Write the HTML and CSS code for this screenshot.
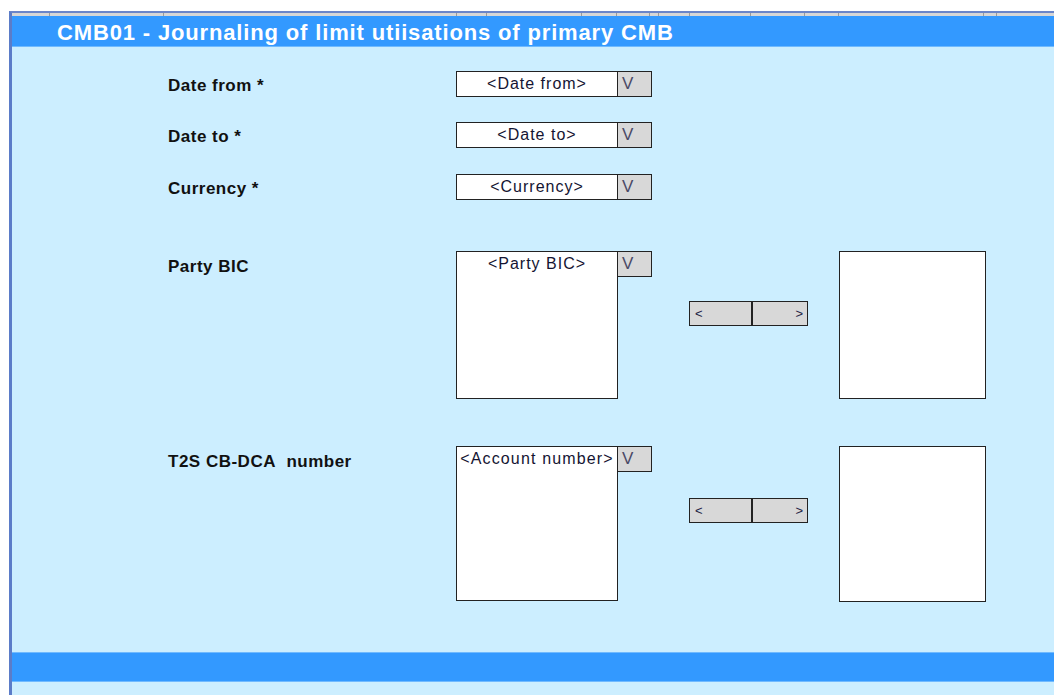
FILE: index.html
```html
<!DOCTYPE html>
<html>
<head>
<meta charset="utf-8">
<link rel="stylesheet" href="styles.css">
</head>
<body>
<div class="frame">
  <div class="ruler">
    <span style="width:38px"></span><span style="width:114px"></span><span style="width:293px"></span><span style="width:30px"></span><span style="width:95px"></span><span style="width:35px"></span><span style="width:33px"></span><span style="width:9px"></span><span style="width:31px"></span><span style="width:61px"></span><span style="width:54px"></span><span style="width:34px"></span><span style="width:145px"></span><span style="width:13px"></span><span class="rest"></span>
  </div>
  <div class="header">CMB01 - Journaling of limit utiisations of primary CMB</div>
  <div class="content">
    <div class="row r1">
      <div class="label">Date from *</div>
      <div class="combo"><div class="field">&lt;Date from&gt;</div><div class="btn">V</div></div>
    </div>
    <div class="row r2">
      <div class="label">Date to *</div>
      <div class="combo"><div class="field">&lt;Date to&gt;</div><div class="btn">V</div></div>
    </div>
    <div class="row r3">
      <div class="label">Currency *</div>
      <div class="combo"><div class="field">&lt;Currency&gt;</div><div class="btn">V</div></div>
    </div>
    <div class="group g1">
      <div class="label">Party BIC</div>
      <div class="combo top"><div class="list">&lt;Party BIC&gt;</div><div class="btn">V</div></div>
      <div class="arrows"><div class="al">&lt;</div><div class="ar">&gt;</div></div>
      <div class="target"></div>
    </div>
    <div class="group g2">
      <div class="label">T2S CB-DCA&nbsp; number</div>
      <div class="combo top"><div class="list">&lt;Account number&gt;</div><div class="btn">V</div></div>
      <div class="arrows"><div class="al">&lt;</div><div class="ar">&gt;</div></div>
      <div class="target"></div>
    </div>
  </div>
  <div class="footer"></div>
  <div class="tail"></div>
</div>
</body>
</html>
```

FILE: styles.css
```css
html, body {
  margin: 0;
  padding: 0;
  background: #ffffff;
  font-family: "Liberation Sans", Arial, sans-serif;
}
.frame {
  margin-top: 11px;
  margin-left: 9px;
  border-left: 3px solid #5b7cc8;
  border-top: 2px solid #6a85c9;
  height: 682px;
  display: flex;
  flex-direction: column;
  background: #cceeff;
}
.ruler {
  display: flex;
  height: 3px;
  background: #d6d6d6;
  flex: none;
}
.ruler span {
  box-sizing: border-box;
  border-right: 1px solid #9a9a9a;
  flex: none;
}
.ruler .rest {
  flex: 1;
  border-right: none;
}
.header {
  height: 31px;
  box-sizing: border-box;
  padding-top: 3px;
  line-height: 28px;
  background: #3399ff;
  color: #ffffff;
  font-weight: bold;
  font-size: 22px;
  letter-spacing: 0.85px;
  padding-left: 45px;
  border-bottom: 1px solid #6fbaff;
  white-space: nowrap;
  flex: none;
}
.content {
  padding-top: 24px;
  padding-left: 156px;
  flex: none;
  height: 581px;
  box-sizing: border-box;
}
.row {
  display: flex;
  align-items: center;
  height: 26px;
}
.r2 { margin-top: 25px; }
.r3 { margin-top: 26px; }
.label {
  width: 288px;
  flex: none;
  font-weight: bold;
  font-size: 17px;
  letter-spacing: 0.5px;
  color: #111111;
  white-space: nowrap;
  padding-top: 3px;
  box-sizing: border-box;
}
.combo {
  display: flex;
  flex: none;
}
.combo.top {
  align-items: flex-start;
}
.field, .list {
  box-sizing: border-box;
  width: 162px;
  height: 26px;
  border: 1px solid #222222;
  background: #ffffff;
  text-align: center;
  font-size: 16px;
  letter-spacing: 1px;
  line-height: 24px;
  color: #141432;
  white-space: nowrap;
  overflow: visible;
}
.btn {
  box-sizing: border-box;
  width: 35px;
  height: 26px;
  margin-left: -1px;
  border: 1px solid #222222;
  background: #d8d8d8;
  font-size: 17px;
  line-height: 24px;
  padding-left: 4px;
  color: #4a4a66;
}
.group {
  display: flex;
  align-items: flex-start;
}
.group .label {
  line-height: 28px;
  padding-top: 2px;
}
.g1 { margin-top: 51px; height: 148px; }
.g2 { margin-top: 47px; height: 155px; }
.g1 .list { height: 148px; }
.g2 .list { height: 155px; letter-spacing: 1.15px; }
.arrows {
  display: flex;
  margin-left: 37px;
  width: 119px;
  height: 25px;
  box-sizing: border-box;
  border: 1px solid #222222;
  background: #d8d8d8;
  font-size: 13px;
  line-height: 23px;
  color: #222244;
  flex: none;
}
.g1 .arrows { margin-top: 50px; }
.g2 .arrows { margin-top: 52px; }
.al {
  box-sizing: border-box;
  width: 63px;
  border-right: 2px solid #222222;
  padding-left: 5px;
}
.ar {
  flex: 1;
  text-align: right;
  padding-right: 4px;
}
.target {
  margin-left: 31px;
  width: 147px;
  box-sizing: border-box;
  border: 1px solid #222222;
  background: #ffffff;
  flex: none;
}
.g1 .target { height: 148px; }
.g2 .target { height: 156px; }
.footer {
  height: 30px;
  background: #3399ff;
  border-top: 1px solid #70baff;
  border-bottom: 1px solid #70baff;
  box-sizing: border-box;
  flex: none;
  margin-top: 24px;
}
.tail {
  flex: 1;
}
```
